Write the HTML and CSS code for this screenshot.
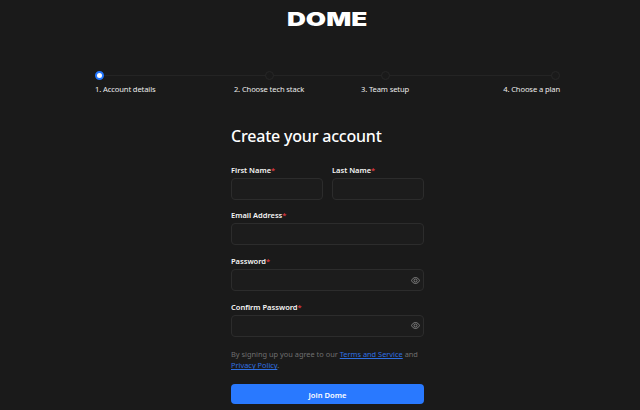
FILE: index.html
```html
<!DOCTYPE html>
<html lang="en">
<head>
<meta charset="utf-8">
<title>Dome</title>
<link rel="stylesheet" href="styles.css">
</head>
<body>
<div class="page">
  <header class="brand"><span class="logo">DOME</span></header>
  <ol class="stepper">
    <li class="step step-first active"><span class="dot"></span><span class="step-label">1. Account details</span></li>
    <li class="step"><span class="dot"></span><span class="step-label">2. Choose tech stack</span></li>
    <li class="step"><span class="dot"></span><span class="step-label">3. Team setup</span></li>
    <li class="step step-last"><span class="dot"></span><span class="step-label">4. Choose a plan</span></li>
  </ol>
  <form class="form">
    <h1 class="title">Create your account</h1>
    <div class="row">
      <label class="field"><span class="label">First Name<em>*</em></span><span class="input"></span></label>
      <label class="field"><span class="label">Last Name<em>*</em></span><span class="input"></span></label>
    </div>
    <label class="field"><span class="label">Email Address<em>*</em></span><span class="input"></span></label>
    <label class="field"><span class="label">Password<em>*</em></span><span class="input">
      <svg class="eye" viewBox="0 0 24 24" fill="none" stroke="currentColor" stroke-width="2.500"><path d="M1.500 12C4 6.500 7.700 4 12 4S20 6.500 22.500 12C20 17.500 16.300 20 12 20S4 17.500 1.500 12Z"/><circle cx="12" cy="12" r="4"/></svg></span></label>
    <label class="field"><span class="label">Confirm Password<em>*</em></span><span class="input">
      <svg class="eye" viewBox="0 0 24 24" fill="none" stroke="currentColor" stroke-width="2.500"><path d="M1.500 12C4 6.500 7.700 4 12 4S20 6.500 22.500 12C20 17.500 16.300 20 12 20S4 17.500 1.500 12Z"/><circle cx="12" cy="12" r="4"/></svg></span></label>
    <p class="terms">By signing up you agree to our <a href="#">Terms and Service</a> and <a href="#">Privacy Policy</a>.</p>
    <button class="submit" type="button">Join Dome</button>
  </form>
</div>
</body>
</html>
```
FILE: styles.css
```css
* { box-sizing: border-box; }
html, body { margin: 0; height: 100%; }
body {
  background: #1a1a1a;
  color: #fff;
  font-family: "Noto Sans", "Open Sans", sans-serif;
  overflow: hidden;
}
.page { width: 640px; height: 410px; display: flex; flex-direction: column; align-items: flex-start; }
.brand { height: 73px; padding-top: 7px; width: 100%; display: flex; justify-content: center; padding-left: 15px; }
.logo {
  font-family: Inter, sans-serif;
  font-weight: 900;
  font-size: 19px;
  line-height: 26px;
  display: inline-block;
  transform: scaleX(1.38);
}
.stepper {
  position: relative;
  list-style: none;
  margin: 0 0 0 95px;
  padding: 0;
  width: 465px;
  height: 54px;
  display: grid;
  grid-template-columns: 135px 78px 154px 98px;
}
.stepper::before {
  content: "";
  position: absolute;
  left: 4px; right: 4px; top: 2px;
  height: 1px;
  background: #242424;
}
.step { position: relative; display: flex; flex-direction: column; align-items: center; gap: 3px; margin-top: -2px; }
.step-first { align-items: flex-start; }
.step-last { align-items: flex-end; }
.dot {
  width: 9px; height: 9px; border-radius: 50%;
  background: #1a1a1a; border: 1px solid #272727;
}
.active .dot { background: #fff; border: 2px solid #2176ff; }
.step-label { font-size: 7.600px; line-height: 12px; letter-spacing: -0.12px; color: #ececec; white-space: nowrap; }
.form { width: 193px; margin-left: 231px; display: flex; flex-direction: column; gap: 9.700px; }
.title { margin: 0; padding-bottom: 9px; font-size: 16px; line-height: 18px; font-weight: 500; letter-spacing: -0.2px; white-space: nowrap; }
.row { display: flex; gap: 9px; }
.row .field { flex: 1; }
.field { display: flex; flex-direction: column; gap: 2px; }
.label { font-size: 7.500px; line-height: 12px; font-weight: 600; color: #f5f5f5; white-space: nowrap; }
.label em { color: #d9363e; font-style: normal; }
.input {
  height: 22px;
  border: 1px solid #2c2c2c;
  border-radius: 4px;
  background: #1c1c1c;
  display: flex;
  align-items: center;
  justify-content: flex-end;
  padding-right: 3px;
  color: #858585;
}
.eye { width: 9px; height: 9px; }
.terms { margin: 3px 0 0; font-size: 7.400px; line-height: 11px; color: #6f6f6f; }
.terms a { color: #2f6fe0; }
.submit {
  margin-top: 3px;
  height: 20px;
  border: 0;
  border-radius: 4px;
  background: #2979ff;
  color: #fff;
  font: 600 7.600px/20px "Noto Sans", sans-serif;
}
```
